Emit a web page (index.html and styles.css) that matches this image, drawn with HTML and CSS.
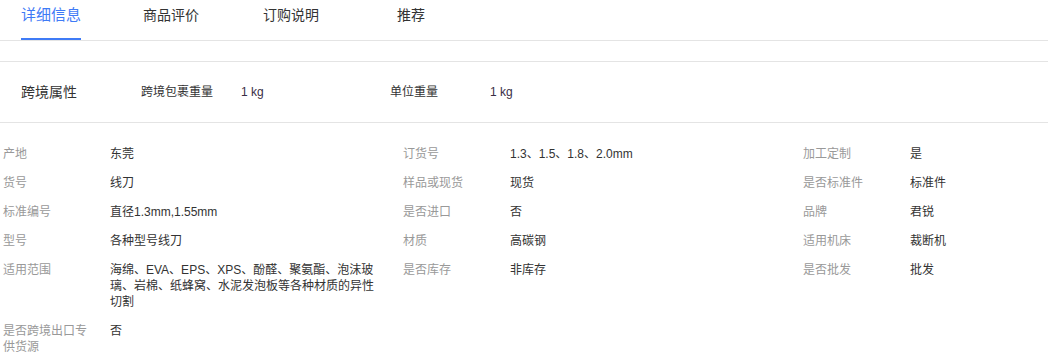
FILE: index.html
```html
<!DOCTYPE html>
<html lang="zh-CN">
<head>
<meta charset="utf-8">
<title>详细信息</title>
<link rel="stylesheet" href="styles.css">
</head>
<body>
<div class="page">
  <nav class="tabs">
    <div class="tab active"><span class="tab-label">详细信息</span></div>
    <div class="tab"><span class="tab-label">商品评价</span></div>
    <div class="tab"><span class="tab-label">订购说明</span></div>
    <div class="tab"><span class="tab-label">推荐</span></div>
  </nav>

  <section class="cross">
    <div class="cross-title">跨境属性</div>
    <div class="cross-pair">
      <span class="cross-label">跨境包裹重量</span>
      <span class="cross-value">1 kg</span>
    </div>
    <div class="cross-pair">
      <span class="cross-label">单位重量</span>
      <span class="cross-value">1 kg</span>
    </div>
  </section>

  <section class="attrs">
    <div class="attr"><span class="attr-label">产地</span><span class="attr-value">东莞</span></div>
    <div class="attr"><span class="attr-label">订货号</span><span class="attr-value">1.3、1.5、1.8、2.0mm</span></div>
    <div class="attr"><span class="attr-label">加工定制</span><span class="attr-value">是</span></div>

    <div class="attr"><span class="attr-label">货号</span><span class="attr-value">线刀</span></div>
    <div class="attr"><span class="attr-label">样品或现货</span><span class="attr-value">现货</span></div>
    <div class="attr"><span class="attr-label">是否标准件</span><span class="attr-value">标准件</span></div>

    <div class="attr"><span class="attr-label">标准编号</span><span class="attr-value">直径1.3mm,1.55mm</span></div>
    <div class="attr"><span class="attr-label">是否进口</span><span class="attr-value">否</span></div>
    <div class="attr"><span class="attr-label">品牌</span><span class="attr-value">君锐</span></div>

    <div class="attr"><span class="attr-label">型号</span><span class="attr-value">各种型号线刀</span></div>
    <div class="attr"><span class="attr-label">材质</span><span class="attr-value">高碳钢</span></div>
    <div class="attr"><span class="attr-label">适用机床</span><span class="attr-value">裁断机</span></div>

    <div class="attr"><span class="attr-label">适用范围</span><span class="attr-value">海绵、EVA、EPS、XPS、酚醛、聚氨酯、泡沫玻璃、岩棉、纸蜂窝、水泥发泡板等各种材质的异性切割</span></div>
    <div class="attr"><span class="attr-label">是否库存</span><span class="attr-value">非库存</span></div>
    <div class="attr"><span class="attr-label">是否批发</span><span class="attr-value">批发</span></div>

    <div class="attr"><span class="attr-label">是否跨境出口专供货源</span><span class="attr-value">否</span></div>
  </section>
</div>
</body>
</html>
```

FILE: styles.css
```css
html, body {
  margin: 0;
  padding: 0;
  background: #ffffff;
}

body {
  font-family: "Liberation Sans", "Noto Sans CJK SC", sans-serif;
  color: #333333;
  overflow: hidden;
}

.page {
  width: 1048px;
}

/* Tabs */
.tabs {
  display: flex;
  height: 40px;
  border-bottom: 1px solid #e4e4e4;
  margin-bottom: 20px;
}

.tab {
  box-sizing: border-box;
  width: 120px;
  display: flex;
  justify-content: center;
}

.tab:first-child {
  width: 111px;
  padding-right: 9px;
}

.tab-label {
  display: block;
  padding-top: 5px;
  padding-bottom: 13px;
  line-height: 20px;
  height: 20px;
  font-size: 14px;
  color: #333333;
  border-bottom: 2px solid transparent;
}

.tab.active .tab-label {
  font-size: 15px;
  color: #3f7bf6;
  border-bottom-color: #3f7bf6;
}

/* Cross-border attributes */
.cross {
  display: flex;
  align-items: center;
  height: 60px;
  border-top: 1px solid #e4e4e4;
  border-bottom: 1px solid #e4e4e4;
  padding-left: 21px;
}

.cross-title {
  width: 120px;
  font-size: 14px;
  color: #333333;
  line-height: 20px;
}

.cross-pair {
  display: flex;
  width: 249px;
  font-size: 12px;
  line-height: 16px;
}

.cross-label {
  width: 100px;
  color: #333333;
}

.cross-value {
  color: #3a2e45;
}

/* Attribute grid */
.attrs {
  display: grid;
  grid-template-columns: 400px 400px 1fr;
  padding: 17px 0 0 3px;
  font-size: 12px;
  line-height: 16px;
}

.attr {
  display: flex;
  align-items: flex-start;
  padding: 6px 0 7px;
  min-width: 0;
}

.attr-label {
  width: 92px;
  margin-right: 15px;
  color: #999999;
  flex: none;
}

.attr-value {
  flex: 0 1 270px;
  min-width: 0;
  color: #333333;
}
```
